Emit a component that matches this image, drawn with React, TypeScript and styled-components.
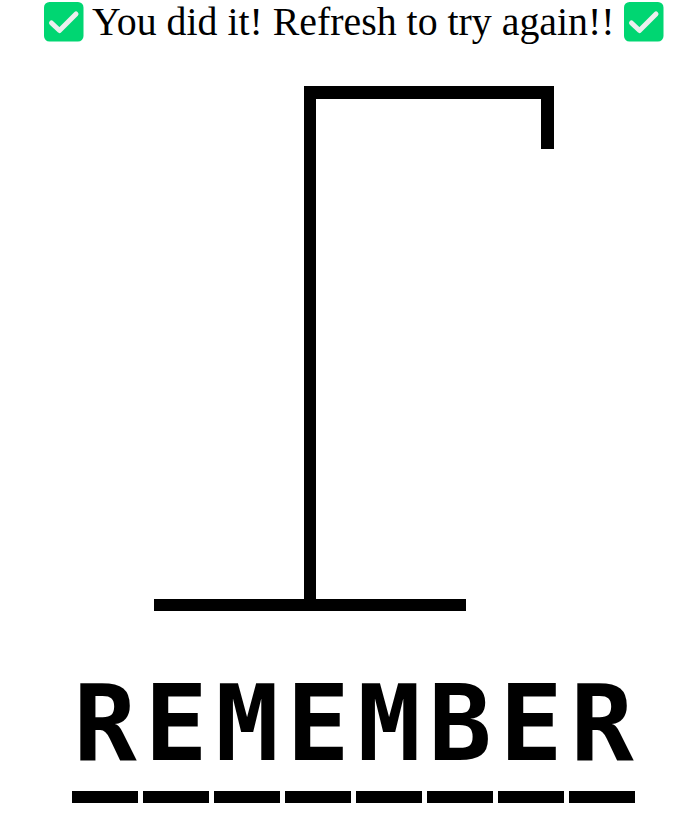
import React from "react";
import styled, { createGlobalStyle } from "styled-components";

const Global = createGlobalStyle`
  html, body { margin: 0; padding: 0; background: #fff; }
  body { font-family: "Liberation Serif", "Times New Roman", serif; color: #000; }
`;

const Page = styled.div`
  width: 686px;
  height: 825px;
  overflow: hidden;
  display: flex;
  flex-direction: column;
  align-items: flex-start;
`;

const Banner = styled.div`
  display: flex;
  align-items: center;
  gap: 9px;
  height: 44px;
  padding-left: 44px;
  font-size: 39.85px;
  line-height: 44px;
  white-space: nowrap;
`;

const Message = styled.span`
  margin-left: -1px;
`;

const Gallows = styled.svg`
  display: block;
  margin-top: 42px;
  margin-left: 154px;
  width: 400px;
  height: 525px;
  flex: none;
`;

const Word = styled.div`
  display: flex;
  gap: 5px;
  margin-top: 62px;
  margin-left: 72px;
`;

const Slot = styled.div`
  width: 66px;
  height: 118px;
  border-bottom: 12px solid #000;
  box-sizing: content-box;
  display: flex;
  justify-content: center;
  font-family: "DejaVu Sans Mono", monospace;
  font-weight: 700;
  font-size: 105px;
  line-height: 103px;
`;

const Check = () => (
  <svg width="40" height="40" viewBox="0 0 40 40" aria-hidden="true" style={{ flex: "none" }}>
    <rect x="0" y="0" width="39.5" height="39.5" rx="5.5" fill="#00d672" />
    <path d="M7.5 21 L15.5 28.5 L32 12" fill="none" stroke="#eeeeee" strokeWidth="5" strokeLinecap="round" strokeLinejoin="round" />
  </svg>
);

export default function App() {
  return (
    <Page>
      <Global />
      <Banner>
        <Check />
        <Message>You did it! Refresh to try again!!</Message>
        <Check />
      </Banner>
      <Gallows viewBox="0 0 400 525">
        <rect x="150" y="0" width="12" height="520" fill="#000" />
        <rect x="150" y="0" width="250" height="13" fill="#000" />
        <rect x="387" y="0" width="13" height="63" fill="#000" />
        <rect x="0" y="513" width="312" height="12" fill="#000" />
      </Gallows>
      <Word>
        {"REMEMBER".split("").map((c, i) => (
          <Slot key={i}>{c}</Slot>
        ))}
      </Word>
    </Page>
  );
}
